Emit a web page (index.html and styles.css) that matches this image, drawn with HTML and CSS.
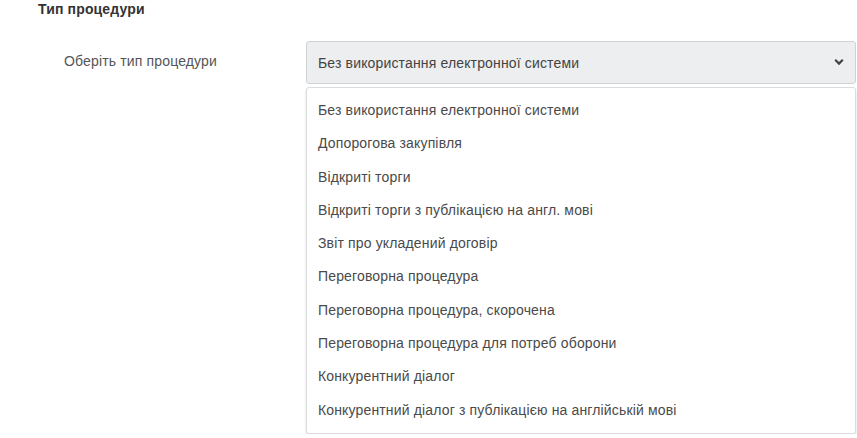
FILE: index.html
```html
<!DOCTYPE html>
<html>
<head>
    <meta charset="utf-8">
    <title>Тип процедури</title>
    <link rel="stylesheet" href="styles.css">
</head>
<body>
    <div class="section">
        <h4 class="section-title">Тип процедури</h4>

        <div class="form-row">
            <label class="form-label">Оберіть тип процедури</label>

            <div class="select-wrap">
                <div class="select-box">
                    <span>Без використання електронної системи</span>
                    <svg class="chevron" width="10" height="8" viewBox="0 0 10 8">
                        <path d="M1.2 1.8 L5 5.6 L8.8 1.8" fill="none" stroke="#444" stroke-width="2.2"/>
                    </svg>
                </div>

                <ul class="select-menu">
                    <li>Без використання електронної системи</li>
                    <li>Допорогова закупівля</li>
                    <li>Відкриті торги</li>
                    <li>Відкриті торги з публікацією на англ. мові</li>
                    <li>Звіт про укладений договір</li>
                    <li>Переговорна процедура</li>
                    <li>Переговорна процедура, скорочена</li>
                    <li>Переговорна процедура для потреб оборони</li>
                    <li>Конкурентний діалог</li>
                    <li>Конкурентний діалог з публікацією на англійській мові</li>
                </ul>
            </div>
        </div>
    </div>
</body>
</html>
```

FILE: styles.css
```css
body {
    margin: 0;
    padding: 0;
    font-family: 'Liberation Sans', Arial, sans-serif;
    font-size: 14px;
    letter-spacing: 0.15px;
    color: #555;
    background: #fff;
    overflow: hidden;
}

.section {
    padding-left: 38px;
}

.section-title {
    margin: 0;
    font-size: 14px;
    line-height: 18px;
    font-weight: bold;
    color: #333;
}

.form-row {
    display: flex;
    margin-top: 23px;
}

.form-label {
    width: 268px;
    padding-left: 26px;
    padding-top: 11px;
    line-height: 18px;
    color: #555;
    box-sizing: border-box;
}

.select-wrap {
    width: 550px;
}

.select-box {
    display: flex;
    align-items: center;
    justify-content: space-between;
    height: 43px;
    padding: 0 11px 0 11px;
    box-sizing: border-box;
    background: #eceeef;
    border: 1px solid #d0d3d6;
    border-radius: 3px;
    color: #444;
}

.chevron {
    margin-top: -1px;
}

.select-menu {
    list-style: none;
    margin: 3px 0 0 0;
    padding: 6px 0;
    background: #fff;
    border: 1px solid #dcdcdc;
    border-radius: 3px;
    box-shadow: 0 2px 3px rgba(0, 0, 0, 0.12);
}

.select-menu li {
    line-height: 33.3px;
    padding: 0 11px;
    color: #4a4a4a;
}
```
